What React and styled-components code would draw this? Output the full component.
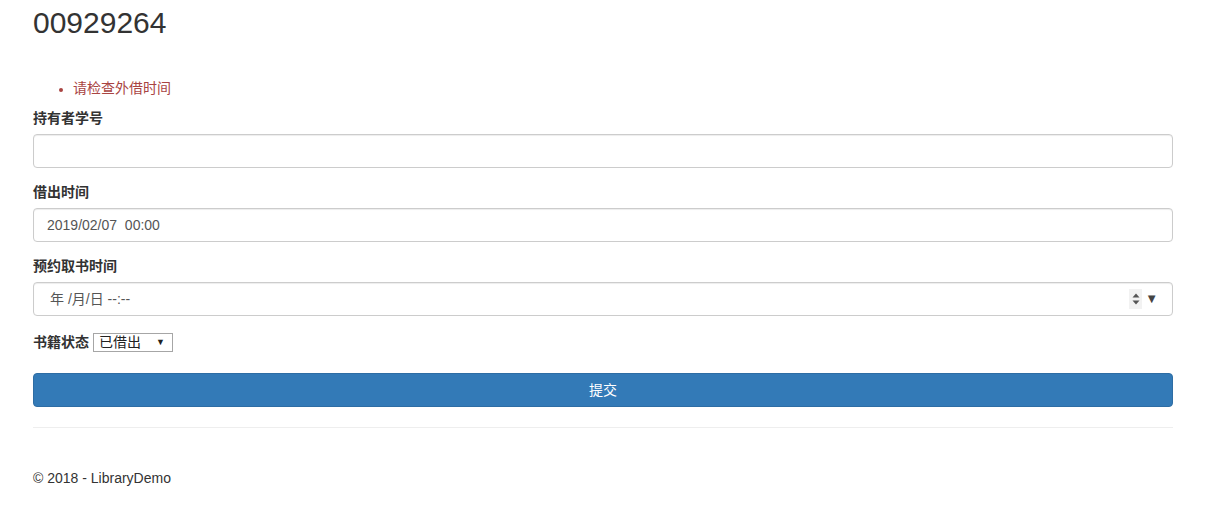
import React from "react";
import styled, { createGlobalStyle } from "styled-components";

const Global = createGlobalStyle`
  html, body { margin: 0; padding: 0; background: #fff; }
  body {
    font-family: "Liberation Sans", Arial, "Noto Sans CJK SC", sans-serif;
    font-size: 14px;
    line-height: 1.42857;
    color: #333;
  }
  * { box-sizing: border-box; }
`;

const Container = styled.div`
  width: 1140px;
  margin-left: 33px;
`;

const Title = styled.h2`
  font-size: 30px;
  font-weight: 500;
  line-height: 1.1;
  margin: 6px 0 0;
  color: #333;
`;

const ErrorList = styled.ul`
  margin: 39px 0 10px;
  padding-left: 40px;
  color: #a94442;
  font-size: 14px;
  line-height: 20px;
  li::marker { font-size: 12px; }
`;

const Group = styled.div`
  margin-bottom: 14px;
`;

const Label = styled.label`
  display: block;
  font-weight: bold;
  margin-bottom: 6px;
  line-height: 20px;
`;

const InlineLabel = styled.label`
  font-weight: bold;
  line-height: 20px;
  margin-right: 4px;
`;

const Input = styled.div`
  display: flex;
  align-items: center;
  height: 34px;
  width: 100%;
  padding: 6px 13px;
  border: 1px solid #ccc;
  border-radius: 4px;
  box-shadow: inset 0 1px 1px rgba(0, 0, 0, 0.075);
  color: #555;
  font-size: 14px;
  line-height: 20px;
`;

const DateText = styled.span`
  flex: 1;
  padding-left: 3px;
  color: #555;
`;

const Spinner = styled.span`
  display: flex;
  flex-direction: column;
  align-items: center;
  justify-content: center;
  width: 13px;
  height: 20px;
  background: #f2f2f2;
  margin-right: 3px;
`;

const Drop = styled.span`
  font-size: 13px;
  color: #444;
  margin-right: 1px;
`;

const InlineRow = styled.div`
  display: flex;
  align-items: center;
  margin-top: 16px;
  margin-bottom: 15px;
`;

const FakeSelect = styled.div`
  display: flex;
  align-items: center;
  justify-content: space-between;
  width: 80px;
  height: 19px;
  border: 1px solid #a6a6a6;
  padding: 0 7px 0 5px;
  color: #222;
  font-size: 14px;
  line-height: 17px;
`;

const SelArrow = styled.span`
  font-size: 9px;
  color: #222;
`;

const Button = styled.button`
  display: block;
  width: 100%;
  height: 34px;
  margin-top: 21px;
  padding: 6px 12px;
  background: #337ab7;
  border: 1px solid #2e6da4;
  border-radius: 4px;
  color: #fff;
  font-family: inherit;
  font-size: 14px;
  line-height: 20px;
`;

const Hr = styled.hr`
  margin: 20px 0 0;
  border: 0;
  border-top: 1px solid #eee;
`;

const Footer = styled.footer`
  margin-top: 40px;
  color: #333;
  font-size: 14px;
  line-height: 20px;
`;

export default function App() {
  return (
    <>
      <Global />
      <Container>
        <Title>00929264</Title>
        <ErrorList>
          <li>请检查外借时间</li>
        </ErrorList>
        <Group>
          <Label>持有者学号</Label>
          <Input />
        </Group>
        <Group>
          <Label>借出时间</Label>
          <Input>2019/02/07&nbsp;&nbsp;00:00</Input>
        </Group>
        <Group>
          <Label>预约取书时间</Label>
          <Input>
            <DateText>年 /月/日 --:--</DateText>
            <Spinner>
              <svg width="8" height="14" viewBox="0 0 8 14">
                <path d="M0.5 5.5 L4 1.5 L7.5 5.5 Z" fill="#555" />
                <path d="M0.5 8.5 L4 12.5 L7.5 8.5 Z" fill="#555" />
              </svg>
            </Spinner>
            <Drop>▼</Drop>
          </Input>
        </Group>
        <InlineRow>
          <InlineLabel>书籍状态</InlineLabel>
          <FakeSelect>
            <span>已借出</span>
            <SelArrow>▼</SelArrow>
          </FakeSelect>
        </InlineRow>
        <Button>提交</Button>
        <Hr />
        <Footer>© 2018 - LibraryDemo</Footer>
      </Container>
    </>
  );
}
